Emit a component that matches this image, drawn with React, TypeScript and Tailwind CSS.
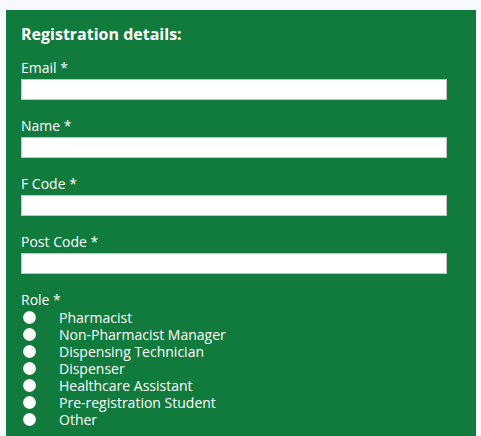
const fields = ['Email', 'Name', 'F Code', 'Post Code'];

const roles = [
  'Pharmacist',
  'Non-Pharmacist Manager',
  'Dispensing Technician',
  'Dispenser',
  'Healthcare Assistant',
  'Pre-registration Student',
  'Other',
];

export default function App() {
  return (
    <div className="min-h-[436px] bg-[#f7f9fc] pt-[10px] font-['Open_Sans',sans-serif] text-white">
      <div className="ml-[6px] w-[470px] min-h-[426px] bg-[#117a3d] px-[15px] pt-[14px]">
        <h2 className="text-[16px] font-bold leading-[20px]">Registration details:</h2>

        <div className="mt-[15px]">
          {fields.map((label) => (
            <div key={label} className="mb-[17px]">
              <label className="block text-[14px] leading-[18px]">{label} *</label>
              <input
                type="text"
                className="mt-[2px] block h-[21px] w-[426px] border border-[#c4c4c4] bg-white outline-none"
              />
            </div>
          ))}

          <div>
            <div className="text-[14px] leading-[18px]">Role *</div>
            <ul>
              {roles.map((role) => (
                <li key={role} className="flex h-[17px] items-center text-[14px] leading-[17px]">
                  <span className="ml-[2px] h-[13px] w-[13px] rounded-full bg-white shadow-[inset_0_0_1px_rgba(0,0,0,0.35)]" />
                  <span className="ml-[23px]">{role}</span>
                </li>
              ))}
            </ul>
          </div>
        </div>
      </div>
    </div>
  );
}
